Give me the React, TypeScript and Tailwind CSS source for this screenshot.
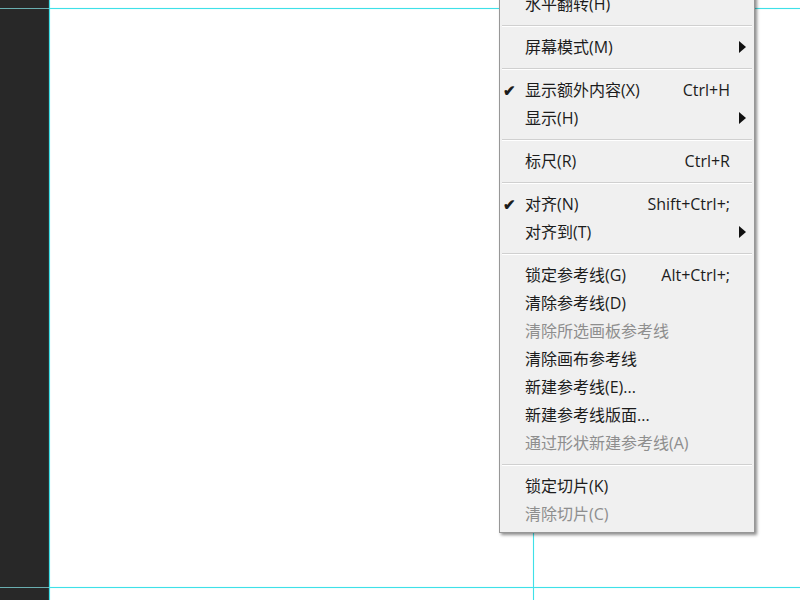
type Item =
  | { sep: true }
  | { sep?: false; label: string; shortcut?: string; checked?: boolean; sub?: boolean; disabled?: boolean };

const items: Item[] = [
  { label: "水平翻转(H)" },
  { sep: true },
  { label: "屏幕模式(M)", sub: true },
  { sep: true },
  { label: "显示额外内容(X)", shortcut: "Ctrl+H", checked: true },
  { label: "显示(H)", sub: true },
  { sep: true },
  { label: "标尺(R)", shortcut: "Ctrl+R" },
  { sep: true },
  { label: "对齐(N)", shortcut: "Shift+Ctrl+;", checked: true },
  { label: "对齐到(T)", sub: true },
  { sep: true },
  { label: "锁定参考线(G)", shortcut: "Alt+Ctrl+;" },
  { label: "清除参考线(D)" },
  { label: "清除所选画板参考线", disabled: true },
  { label: "清除画布参考线" },
  { label: "新建参考线(E)..." },
  { label: "新建参考线版面..." },
  { label: "通过形状新建参考线(A)", disabled: true },
  { sep: true },
  { label: "锁定切片(K)" },
  { label: "清除切片(C)", disabled: true },
];

function MenuRow({ item }: { item: Item }) {
  if (item.sep) {
    return (
      <div className="flex h-[15px] items-center px-[2px]">
        <div className="h-[2px] w-full border-t border-[#d0d0d0] border-b border-b-white" />
      </div>
    );
  }
  return (
    <div
      className={`flex h-[28px] items-center text-[16px] ${
        item.disabled ? "text-[#8e8e8e]" : "text-[#1c1c1c]"
      }`}
    >
      <span className="w-[25px] pl-[3px] text-[15px] font-bold">{item.checked ? "✔" : ""}</span>
      <span className="flex-1 whitespace-nowrap">{item.label}</span>
      <span className="whitespace-nowrap">{item.shortcut ?? ""}</span>
      <span className="flex w-[24px] justify-center">
        {item.sub && (
          <svg width="7" height="12" viewBox="0 0 7 12">
            <path d="M0 0 L7 6 L0 12 Z" fill="#111" />
          </svg>
        )}
      </span>
    </div>
  );
}

export default function App() {
  return (
    <div
      className="relative flex h-[600px] w-[800px] overflow-hidden bg-white"
      style={{ fontFamily: '"Open Sans", "Noto Sans CJK SC", sans-serif' }}
    >
      <div className="w-[49px] shrink-0 bg-[#282828]" />
      <div className="flex-1 bg-white" />

      {/* guides */}
      <div className="absolute left-0 top-[8px] h-px w-[49px] bg-[#6aaeb0]" />
      <div className="absolute left-[49px] right-0 top-[8px] h-px bg-[#3fe0e8] shadow-[0_0_1px_#7ff0f4]" />
      <div className="absolute left-0 top-[587px] h-px w-[49px] bg-[#6aaeb0]" />
      <div className="absolute left-[49px] right-0 top-[587px] h-px bg-[#3fe0e8] shadow-[0_0_1px_#7ff0f4]" />
      <div className="absolute bottom-0 left-[49px] top-0 w-px bg-[#3fe0e8] shadow-[0_0_1px_#7ff0f4]" />
      <div className="absolute bottom-0 left-[533px] top-0 w-px bg-[#3fe0e8] shadow-[0_0_1px_#7ff0f4]" />

      {/* menu */}
      <div className="absolute left-[499px] top-[-12px] w-[256px] border border-[#979797] bg-[#f0f0f0] pb-[4px] pt-[1px] shadow-[2px_2px_3px_rgba(0,0,0,0.45)]">
        {items.map((item, i) => (
          <MenuRow key={i} item={item} />
        ))}
      </div>
    </div>
  );
}
